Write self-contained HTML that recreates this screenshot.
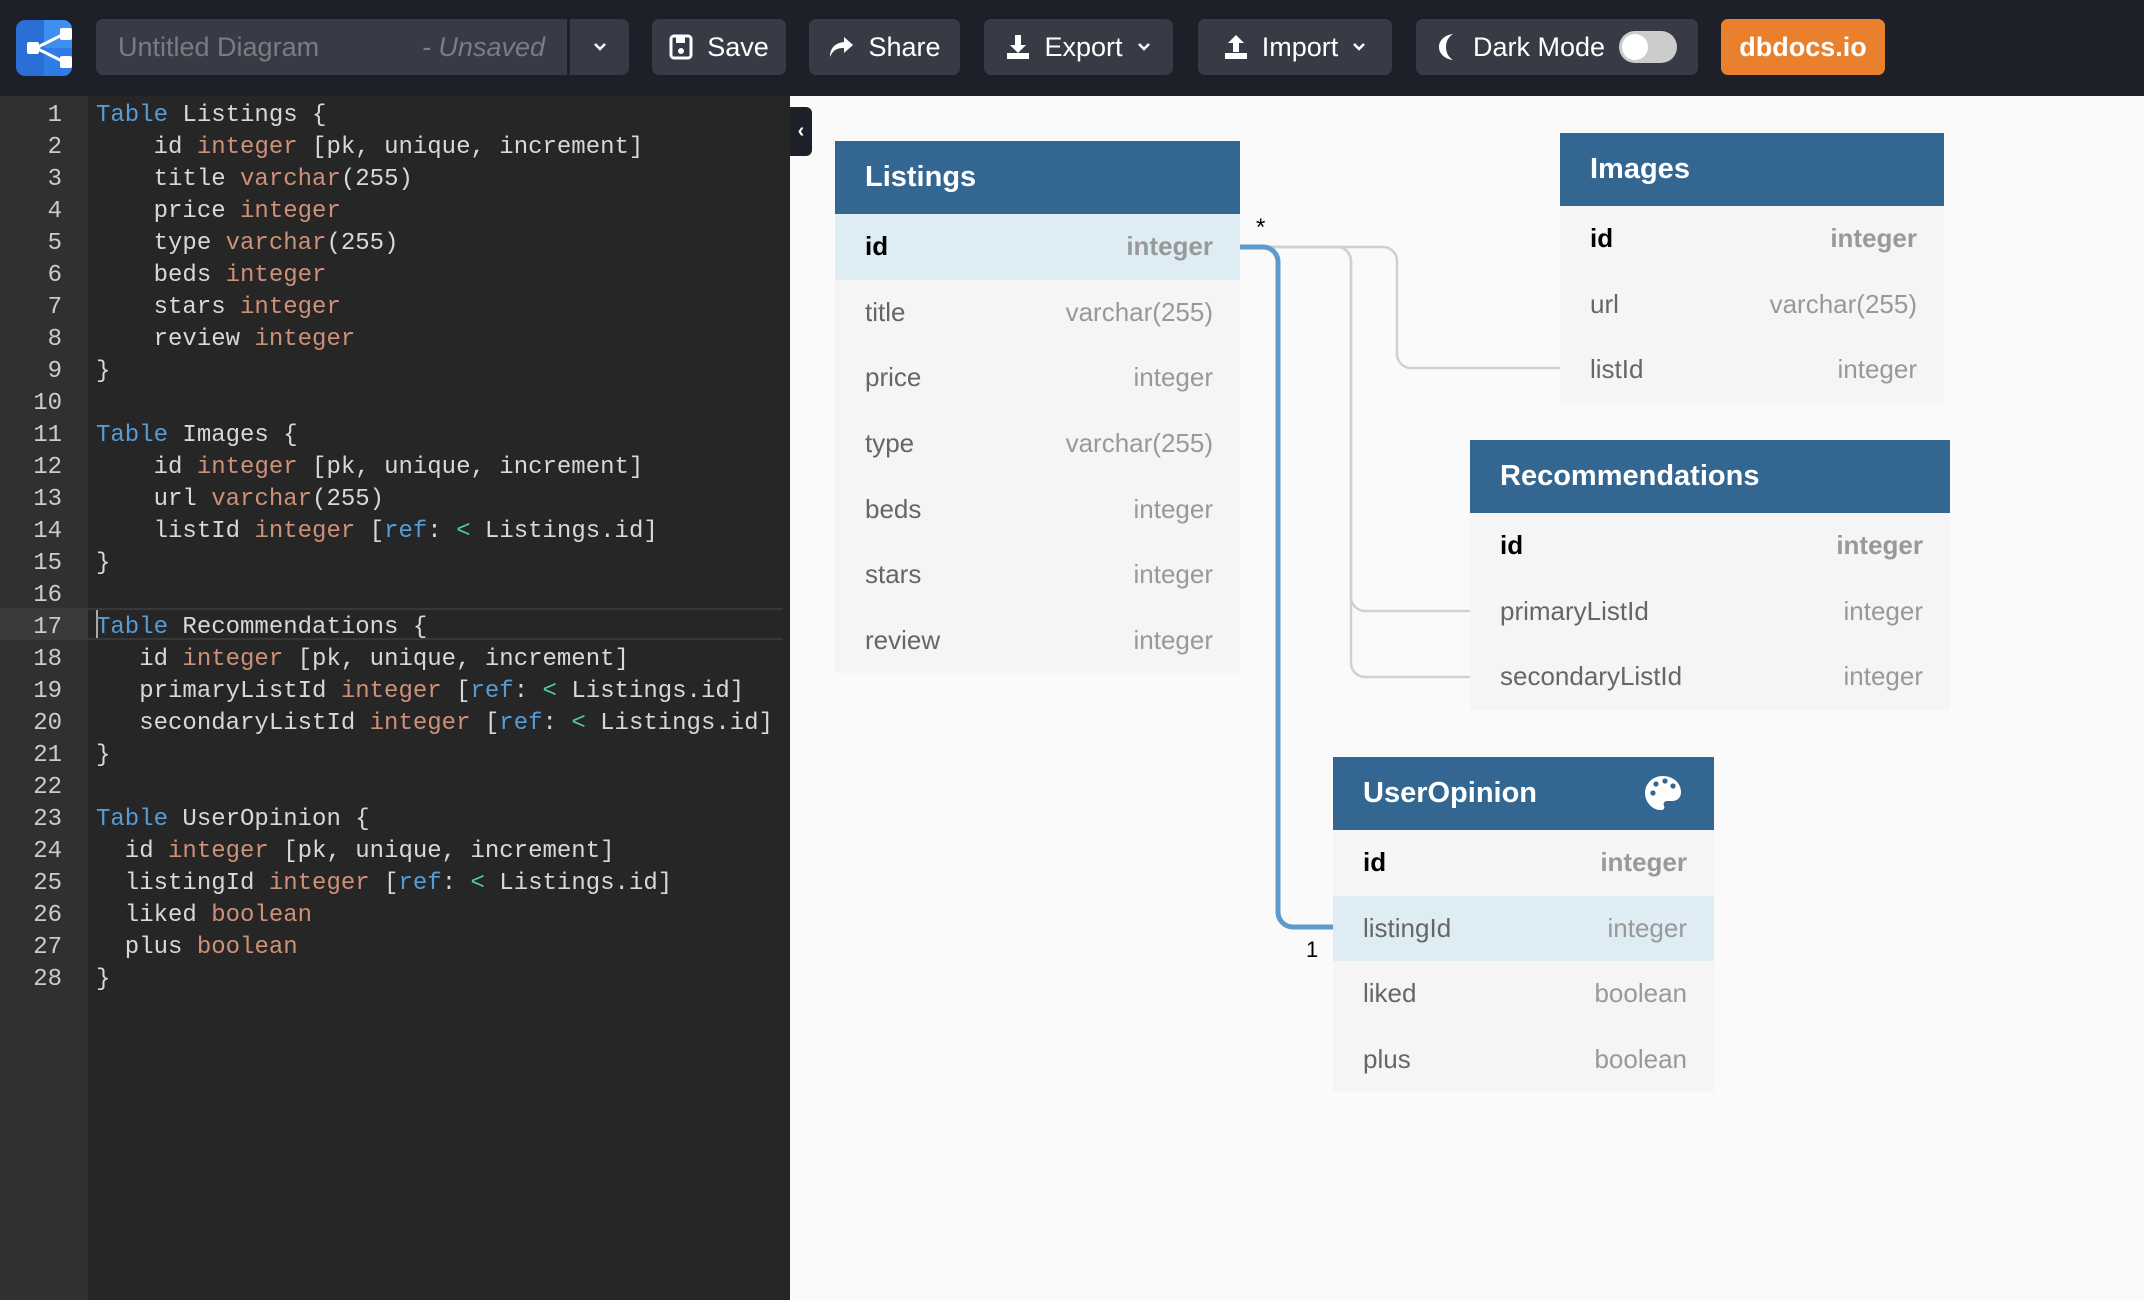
<!DOCTYPE html>
<html><head><meta charset="utf-8"><style>
*{box-sizing:border-box;margin:0;padding:0}
body{width:2144px;height:1300px;overflow:hidden;background:#fafafa;font-family:"Liberation Sans",sans-serif;position:relative}
.hdr{position:absolute;left:0;top:0;width:2144px;height:96px;background:#1e2029}
.btn{position:absolute;top:19px;height:56px;background:#373b46;border-radius:7px;color:#fff;font-size:27px;display:flex;align-items:center;justify-content:center;gap:14px}
.gut{position:absolute;left:0;top:96px;width:88px;height:1204px;background:#303030}
.ed{position:absolute;left:88px;top:96px;width:702px;height:1204px;background:#262626}
.ln{position:absolute;left:0;width:62px;text-align:right;color:#ccc;font:24px "Liberation Mono",monospace;line-height:32px}
.cd{position:absolute;left:96px;color:#d8d8d8;font:24px "Liberation Mono",monospace;line-height:32px;white-space:pre}
.k{color:#569cd6}.t{color:#ce9178}.g{color:#4ec9b0}
.tb{position:absolute;background:#f5f5f5}
.th{height:73px;background:#336791;color:#fff;font-weight:bold;font-size:29px;padding-left:30px;line-height:73px;position:relative}
.r{height:65.6px;display:flex;justify-content:space-between;align-items:center;padding:0 27px 0 30px;font-size:26px;color:#666}
.r span:last-child{color:#999}
.r.pk span:first-child{color:#000;font-weight:bold}.r.pk span:last-child{font-weight:bold}
.r.hl{background:#deecf4}
</style></head><body>
<div class="hdr">
 <svg style="position:absolute;left:16px;top:20px" width="56" height="56" viewBox="0 0 56 56"><rect width="56" height="56" rx="9" fill="#2a6fd6"/><path d="M28 0h19a9 9 0 0 1 9 9v19H28z" fill="#3d8ff0"/><path d="M28 28h28v19a9 9 0 0 1-9 9H28z" fill="#2e7ce6"/><path d="M20 28L50 13M20 28L50 43" stroke="#fff" stroke-width="3"/><rect x="11" y="22" width="12" height="12" rx="2" fill="#fff"/><rect x="44" y="8" width="12" height="12" rx="2" fill="#fff"/><rect x="44" y="36" width="12" height="12" rx="2" fill="#fff"/></svg>
 <div class="btn" style="left:96px;width:471px;justify-content:space-between;padding:0 22px;border-radius:7px 0 0 7px;color:#7a7c82"><span>Untitled Diagram</span><span style="font-style:italic">- Unsaved</span></div>
 <div class="btn" style="left:570px;width:59px;border-radius:0 7px 7px 0"><svg width="14" height="10" viewBox="0 0 14 10"><path d="M2 2l5 5 5-5" fill="none" stroke="#fff" stroke-width="2.5"/></svg></div>
 <div class="btn" style="left:652px;width:134px"><svg width="24" height="26" viewBox="0 0 24 26"><rect x="2" y="2" width="20" height="22" rx="3" fill="none" stroke="#fff" stroke-width="3"/><rect x="7" y="3" width="9" height="6" fill="#fff"/><circle cx="12" cy="17" r="3" fill="#fff"/></svg>Save</div>
 <div class="btn" style="left:809px;width:151px"><svg width="26" height="24" viewBox="0 0 26 24"><path d="M16 2l9 8-9 8v-5C9 13 5 15 2 22 2 13 7 8 16 7z" fill="#fff"/></svg>Share</div>
 <div class="btn" style="left:984px;width:189px"><svg width="24" height="26" viewBox="0 0 24 26"><path d="M9 1h6v10h5l-8 8-8-8h5z" fill="#fff"/><rect x="1" y="19" width="22" height="6" fill="#fff"/></svg>Export <svg width="14" height="10" viewBox="0 0 14 10"><path d="M2 2l5 5 5-5" fill="none" stroke="#fff" stroke-width="2.5"/></svg></div>
 <div class="btn" style="left:1198px;width:194px"><svg width="24" height="26" viewBox="0 0 24 26"><path d="M12 1l8 8h-5v9H9V9H4z" fill="#fff"/><rect x="1" y="19" width="22" height="6" fill="#fff"/></svg>Import <svg width="14" height="10" viewBox="0 0 14 10"><path d="M2 2l5 5 5-5" fill="none" stroke="#fff" stroke-width="2.5"/></svg></div>
 <div class="btn" style="left:1416px;width:282px"><svg width="22" height="28" viewBox="0 0 22 28"><path d="M16 1C8 2 2 7 2 14s6 12 14 13C11 24 9 19 9 14S11 4 16 1z" fill="#fff"/></svg>Dark Mode<span style="display:inline-block;width:58px;height:32px;border-radius:16px;background:#ccc;position:relative"><span style="position:absolute;left:3px;top:3px;width:26px;height:26px;border-radius:50%;background:#fff"></span></span></div>
 <div class="btn" style="left:1721px;width:164px;background:#e8802e;font-weight:bold">dbdocs.io</div>
</div>
<div class="gut"></div><div class="ed"></div>
<div style="position:absolute;left:0;top:608px;width:88px;height:32px;background:#3a3a3a"></div>
<div style="position:absolute;left:88px;top:608px;width:695px;height:32px;border-top:2px solid #383838;border-bottom:2px solid #383838"></div>
<div style="position:absolute;left:96px;top:610px;width:2px;height:28px;background:#aaa"></div>
<div id="lns"></div>
<div style="position:absolute;left:790px;top:107px;width:22px;height:49px;background:#1e2029;border-radius:0 6px 6px 0;color:#fff;font-size:20px;line-height:49px;text-align:center;font-weight:bold">‹</div>
<svg style="position:absolute;left:0;top:0" width="2144" height="1300">
 <g fill="none" stroke="#d0d0d0" stroke-width="2.5">
  <path d="M1240 247H1383a14 14 0 0 1 14 14V354a14 14 0 0 0 14 14H1560"/>
  <path d="M1240 247H1337a14 14 0 0 1 14 14V597a14 14 0 0 0 14 14H1470"/>
  <path d="M1240 247H1337a14 14 0 0 1 14 14V663a14 14 0 0 0 14 14H1470"/>
 </g>
 <path d="M1240 247H1263a15 15 0 0 1 15 15V912a15 15 0 0 0 15 15H1333" fill="none" stroke="#5e9bcc" stroke-width="5"/>
 <text x="1256" y="235" font-size="24" font-family="Liberation Sans" fill="#000">*</text>
 <text x="1306" y="957" font-size="22" font-family="Liberation Sans" fill="#000">1</text>
</svg>
<div class="tb" style="left:835px;top:141px;width:405px">
 <div class="th">Listings</div>
 <div class="r pk hl"><span>id</span><span>integer</span></div>
 <div class="r"><span>title</span><span>varchar(255)</span></div>
 <div class="r"><span>price</span><span>integer</span></div>
 <div class="r"><span>type</span><span>varchar(255)</span></div>
 <div class="r"><span>beds</span><span>integer</span></div>
 <div class="r"><span>stars</span><span>integer</span></div>
 <div class="r"><span>review</span><span>integer</span></div>
</div>
<div class="tb" style="left:1560px;top:133px;width:384px">
 <div class="th">Images</div>
 <div class="r pk"><span>id</span><span>integer</span></div>
 <div class="r"><span>url</span><span>varchar(255)</span></div>
 <div class="r"><span>listId</span><span>integer</span></div>
</div>
<div class="tb" style="left:1470px;top:440px;width:480px">
 <div class="th">Recommendations</div>
 <div class="r pk"><span>id</span><span>integer</span></div>
 <div class="r"><span>primaryListId</span><span>integer</span></div>
 <div class="r"><span>secondaryListId</span><span>integer</span></div>
</div>
<div class="tb" style="left:1333px;top:757px;width:381px">
 <div class="th">UserOpinion<svg style="position:absolute;right:32px;top:18px" width="38" height="36" viewBox="0 0 38 36"><path d="M19 1C8 1 1 9 1 18s7 17 16 17c3 0 4-2 3-4s0-5 3-5h5c6 0 9-4 9-9C37 8 29 1 19 1z" fill="#fff"/><circle cx="9" cy="18" r="2.6" fill="#336791"/><circle cx="12" cy="9" r="2.6" fill="#336791"/><circle cx="21" cy="6" r="2.6" fill="#336791"/><circle cx="29" cy="11" r="2.6" fill="#336791"/></svg></div>
 <div class="r pk"><span>id</span><span>integer</span></div>
 <div class="r hl"><span>listingId</span><span>integer</span></div>
 <div class="r"><span>liked</span><span>boolean</span></div>
 <div class="r"><span>plus</span><span>boolean</span></div>
</div>
<script>
var L=[
'<span class="k">Table</span> Listings {',
'    id <span class="t">integer</span> [pk, unique, increment]',
'    title <span class="t">varchar</span>(255)',
'    price <span class="t">integer</span>',
'    type <span class="t">varchar</span>(255)',
'    beds <span class="t">integer</span>',
'    stars <span class="t">integer</span>',
'    review <span class="t">integer</span>',
'}','',
'<span class="k">Table</span> Images {',
'    id <span class="t">integer</span> [pk, unique, increment]',
'    url <span class="t">varchar</span>(255)',
'    listId <span class="t">integer</span> [<span class="k">ref</span>: <span class="g">&lt;</span> Listings.id]',
'}','',
'<span class="k">Table</span> Recommendations {',
'   id <span class="t">integer</span> [pk, unique, increment]',
'   primaryListId <span class="t">integer</span> [<span class="k">ref</span>: <span class="g">&lt;</span> Listings.id]',
'   secondaryListId <span class="t">integer</span> [<span class="k">ref</span>: <span class="g">&lt;</span> Listings.id]',
'}','',
'<span class="k">Table</span> UserOpinion {',
'  id <span class="t">integer</span> [pk, unique, increment]',
'  listingId <span class="t">integer</span> [<span class="k">ref</span>: <span class="g">&lt;</span> Listings.id]',
'  liked <span class="t">boolean</span>',
'  plus <span class="t">boolean</span>',
'}'];
var h='';for(var i=0;i<L.length;i++){var y=100+i*32;h+='<div class="ln" style="top:'+y+'px">'+(i+1)+'</div><div class="cd" style="top:'+y+'px">'+L[i]+'</div>';}
document.getElementById('lns').innerHTML=h;
</script>
</body></html>
